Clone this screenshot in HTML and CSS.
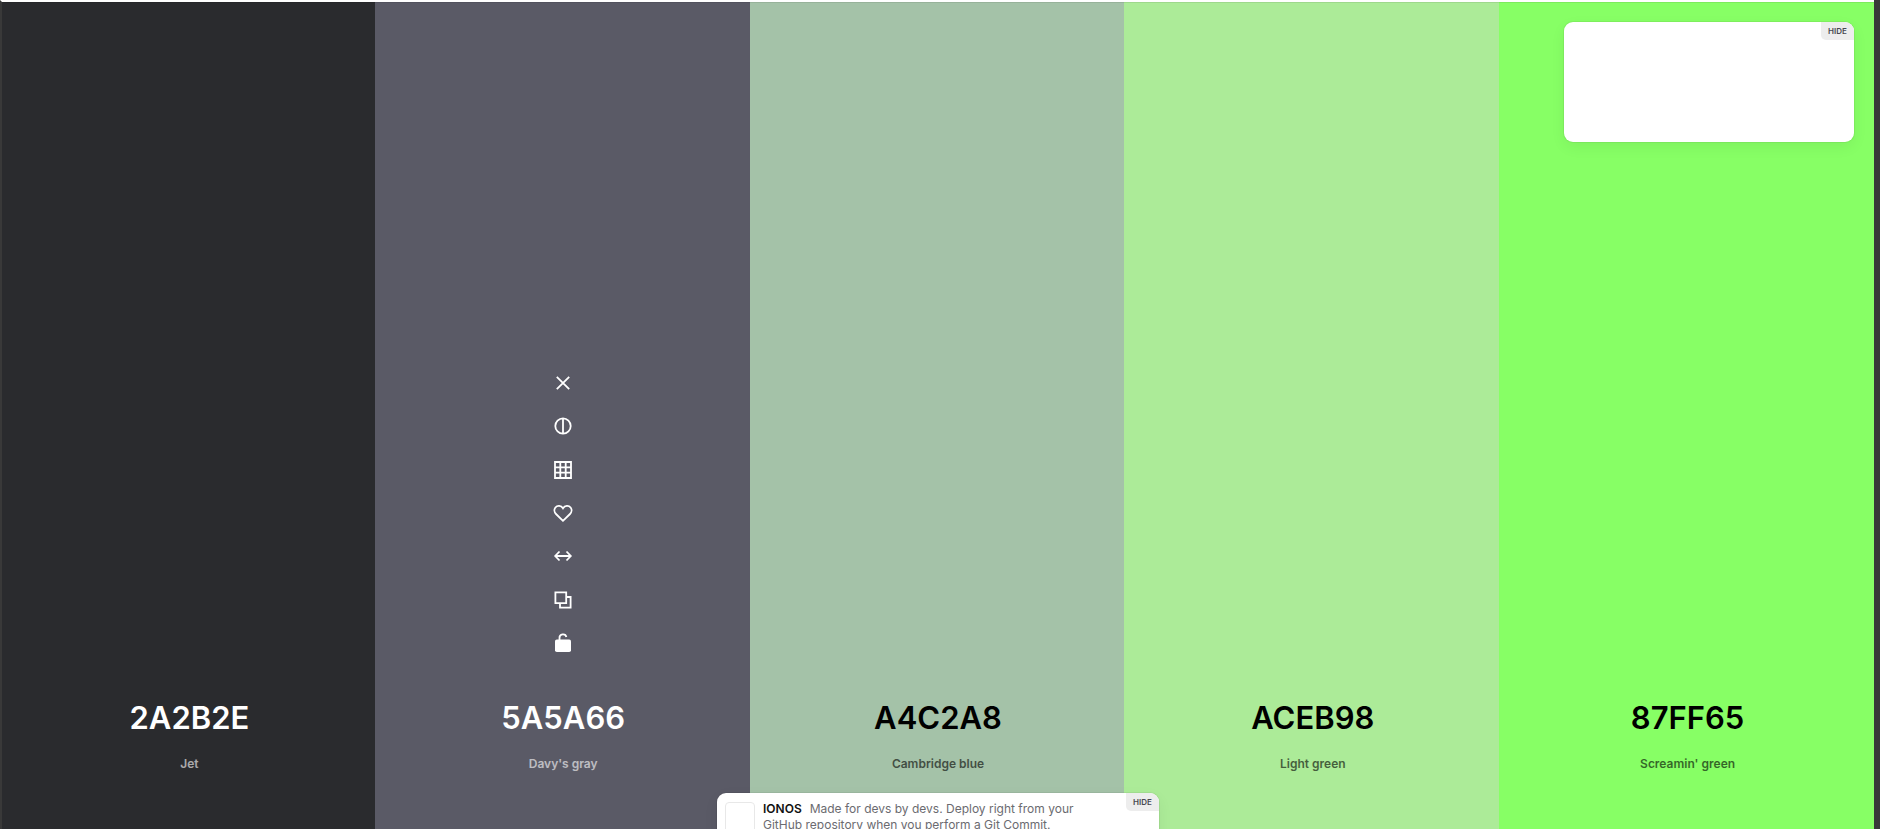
FILE: index.html
```html
<!DOCTYPE html>
<html lang="en">
<head>
<meta charset="utf-8">
<title>Color palette</title>
<link rel="stylesheet" href="styles.css">
</head>
<body>
<main class="palette">
  <section class="color jet">
    <button class="hex">2A2B2E</button>
    <button class="name">Jet</button>
  </section>
  <section class="color davys">
    <div class="tools">
      <button class="tool" aria-label="Remove color"><svg viewBox="0 0 22 22"><path d="M4.800 4.800l12.400 12.400M17.200 4.800L4.800 17.200"/></svg></button>
      <button class="tool" aria-label="Check contrast"><svg viewBox="0 0 22 22"><circle cx="11" cy="11" r="7.700"/><path d="M11 3.300v15.400"/></svg></button>
      <button class="tool" aria-label="View shades"><svg viewBox="0 0 22 22"><path d="M3 3h16v16H3zM8.300 3v16M13.700 3v16M3 8.300h16M3 13.700h16"/></svg></button>
      <button class="tool" aria-label="Save color"><svg viewBox="0 0 22 22"><path d="M11 18.800L4 12C2.200 10.200 1.900 7.400 3.400 5.500C5.300 3.100 9 3.200 11 6.300C13 3.200 16.700 3.100 18.600 5.500C20.100 7.400 19.800 10.200 18 12Z"/></svg></button>
      <button class="tool" aria-label="Drag color"><svg viewBox="0 0 22 22"><path d="M3.500 11h15M7.500 6.500L3.200 11l4.300 4.500M14.500 6.500l4.300 4.500-4.300 4.500"/></svg></button>
      <button class="tool" aria-label="Copy hex"><svg viewBox="0 0 22 22"><path d="M3.400 3.400h10.800v10.800H3.400zM14.200 8h4.400v10.600H8v-4.400"/></svg></button>
      <button class="tool" aria-label="Lock color"><svg viewBox="0 0 22 22"><path d="M7.500 8.500V6a3.500 3.500 0 0 1 6.900-1"/><rect class="solid" x="3" y="7.500" width="16" height="12.500" rx="1.800"/></svg></button>
    </div>
    <button class="hex">5A5A66</button>
    <button class="name">Davy's gray</button>
  </section>
  <section class="color cambridge">
    <button class="hex">A4C2A8</button>
    <button class="name">Cambridge blue</button>
  </section>
  <section class="color light">
    <button class="hex">ACEB98</button>
    <button class="name">Light green</button>
  </section>
  <section class="color screamin">
    <button class="hex">87FF65</button>
    <button class="name">Screamin' green</button>
  </section>
</main>
<aside class="card notice"><button class="hide">HIDE</button></aside>
<aside class="card sponsor">
  <span class="logo"></span>
  <p class="copy"><a class="brand" href="#">IONOS</a>Made for devs by devs. Deploy right from your GitHub repository when you perform a Git Commit.</p>
  <button class="hide">HIDE</button>
</aside>
</body>
</html>
```
FILE: styles.css
```css
* { box-sizing: border-box; }
body {
  margin: 0;
  height: 100vh;
  overflow: hidden;
  position: relative;
  padding-right: 6px;
  background: #393939;
  font-family: Inter, "Liberation Sans", sans-serif;
}
button {
  padding: 0;
  border: 0;
  background: none;
  color: inherit;
  font: inherit;
  cursor: pointer;
}
.palette {
  display: grid;
  grid-template-columns: repeat(5, 1fr);
  height: 100%;
}
.color {
  display: flex;
  flex-direction: column;
  align-items: center;
  justify-content: flex-end;
  padding: 0 0 55px 2px;
  border-top: 2px solid #fff;
  color: #000;
  box-shadow: inset 0 1px rgba(0, 0, 0, 0.08);
}
.jet { background: #2a2b2e; color: #fff; border-left: 2px solid #393939; }
.davys { background: #5a5a66; color: #fff; }
.cambridge { background: #a4c2a8; }
.light { background: #aceb98; }
.screamin { background: #87ff65; }
.hex {
  font-size: 31px;
  line-height: 40px;
  font-weight: 600;
}
.name {
  margin-top: 16px;
  font-size: 12px;
  line-height: 20px;
  font-weight: 600;
  opacity: 0.6;
}
.tools {
  display: flex;
  flex-direction: column;
  justify-content: space-between;
  height: 282px;
  margin-bottom: 44px;
}
.tool { display: block; height: 22px; }
.tool svg {
  display: block;
  width: 22px;
  height: 22px;
  fill: none;
  stroke: #fff;
  stroke-width: 1.8;
}
.tool .solid { fill: #fff; stroke: none; }
.card {
  position: absolute;
  background: #fff;
  border-radius: 9px;
  overflow: hidden;
  box-shadow: 0 0 0 1px rgba(0, 0, 0, 0.05), 0 5px 15px rgba(0, 0, 0, 0.06);
}
.notice { top: 22px; right: 26px; width: 290px; height: 120px; }
.sponsor {
  top: calc(100% - 36px);
  left: 50%;
  width: 442px;
  margin-left: -223px;
  padding: 8px;
  display: flex;
  gap: 8px;
}
.logo {
  flex: none;
  width: 30px;
  height: 44px;
  margin-top: 1px;
  border: 1px solid #e8e8e8;
  border-radius: 4px;
}
.copy {
  margin: 0;
  width: 340px;
  font-size: 12px;
  line-height: 16px;
  color: #6b6b70;
}
.brand {
  margin-right: 8px;
  color: #111;
  font-weight: 600;
  text-decoration: none;
}
.hide {
  position: absolute;
  top: 0;
  right: 0;
  width: 33px;
  height: 18px;
  background: #ededed;
  border-radius: 0 0 0 5px;
  color: #484852;
  font-size: 8px;
  line-height: 18px;
  font-weight: 600;
}
```
